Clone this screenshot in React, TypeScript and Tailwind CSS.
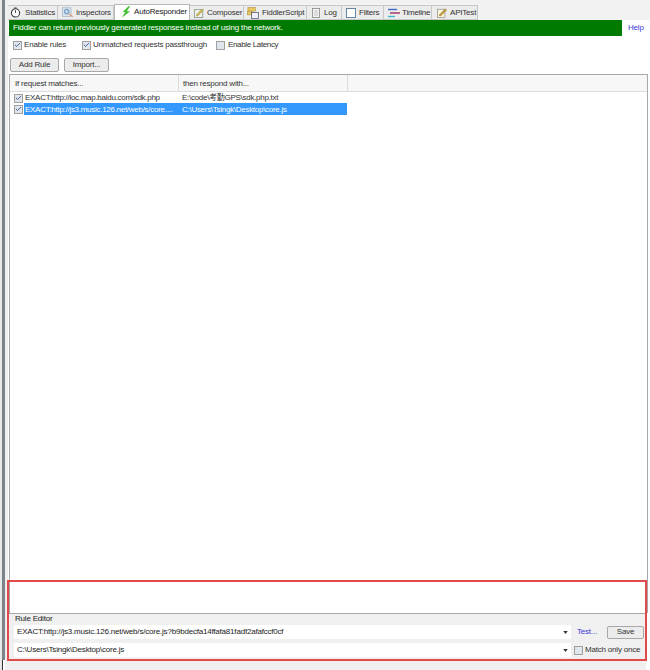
import React from 'react';
import { Check } from 'lucide-react';

const font = { fontFamily: '"Liberation Sans", "Noto Sans CJK SC", sans-serif' };

const tabs = [
  { label: 'Statistics', width: 'w-[50px]', gap: 'gap-[4px]', pad: 'pl-[2px]', icon: 'clock' },
  { label: 'Inspectors', width: 'w-[56px]', gap: 'gap-[2px]', pad: 'pl-[4px]', icon: 'search' },
  { label: 'AutoResponder', width: 'w-[76px]', gap: 'gap-[3px]', pad: 'pl-[6px]', icon: 'bolt', active: true },
  { label: 'Composer', width: 'w-[54px]', gap: 'gap-[3px]', pad: 'pl-[4px]', icon: 'compose' },
  { label: 'FiddlerScript', width: 'w-[63px]', gap: 'gap-[3px]', pad: 'pl-[3px]', icon: 'script' },
  { label: 'Log', width: 'w-[35px]', gap: 'gap-[4px]', pad: 'pl-[5px]', icon: 'log' },
  { label: 'Filters', width: 'w-[42px]', gap: 'gap-[3px]', pad: 'pl-[4px]', icon: 'filter' },
  { label: 'Timeline', width: 'w-[48px]', gap: 'gap-[2px]', pad: 'pl-[3px]', icon: 'timeline' },
  { label: 'APITest', width: 'w-[46px]', gap: 'gap-[3px]', pad: 'pl-[5px]', icon: 'api' },
];

function TabIcon({ name }: { name: string }) {
  if (name === 'clock') {
    return (
      <svg viewBox="0 0 12 12" className="w-[11px] h-[11px] shrink-0">
        <circle cx="6" cy="6.5" r="4.5" fill="#fff" stroke="#333" strokeWidth="1.1" />
        <path d="M6 6.5V3.5M4.8 1h2.4" stroke="#333" strokeWidth="1" fill="none" />
      </svg>
    );
  }
  if (name === 'search') {
    return (
      <svg viewBox="0 0 14 12" className="w-[12px] h-[11px] shrink-0">
        <rect x="0.5" y="0.5" width="10" height="10" fill="#dbe7f2" stroke="#a8b8c8" />
        <circle cx="5.5" cy="5" r="2.8" fill="#b8d4ec" stroke="#5a7fa5" />
        <path d="M8 7.5l4.5 3.5" stroke="#e0a070" strokeWidth="1.6" />
      </svg>
    );
  }
  if (name === 'bolt') {
    return (
      <svg viewBox="0 0 12 14" className="w-[10px] h-[12px] shrink-0">
        <path d="M9 0L2 7h3L1 14l10-8H7l4-6z" fill="#3fbf2e" />
      </svg>
    );
  }
  if (name === 'compose') {
    return (
      <svg viewBox="0 0 12 12" className="w-[10px] h-[10px] shrink-0">
        <rect x="0.5" y="2" width="10" height="9.5" fill="#eef2e6" stroke="#8a9a8a" />
        <path d="M3 8l7-7 1.5 1.5-7 7H3z" fill="#d8b850" stroke="#7a8a50" strokeWidth="0.5" />
      </svg>
    );
  }
  if (name === 'script') {
    return (
      <svg viewBox="0 0 13 13" className="w-[12px] h-[12px] shrink-0">
        <rect x="1" y="0.5" width="8" height="4" fill="#e8c860" stroke="#b09040" strokeWidth="0.6" />
        <rect x="0.5" y="4.5" width="5" height="4" fill="#e8c860" stroke="#b09040" strokeWidth="0.6" />
        <rect x="5" y="6" width="7.5" height="6.5" fill="#eef" stroke="#556" strokeWidth="0.8" />
      </svg>
    );
  }
  if (name === 'log') {
    return (
      <svg viewBox="0 0 10 12" className="w-[8px] h-[10px] shrink-0">
        <rect x="0.5" y="0.5" width="9" height="11" fill="#f4f4f4" stroke="#888" />
        <path d="M2.5 3.5h5M2.5 6h5M2.5 8.5h5" stroke="#bbb" />
      </svg>
    );
  }
  if (name === 'filter') {
    return (
      <svg viewBox="0 0 11 11" className="w-[10px] h-[10px] shrink-0">
        <rect x="0.5" y="0.5" width="10" height="10" fill="#fff" stroke="#5a7a9a" />
      </svg>
    );
  }
  if (name === 'timeline') {
    return (
      <svg viewBox="0 0 13 10" className="w-[13px] h-[10px] shrink-0">
        <path d="M1 1.5h9" stroke="#3a6ac8" strokeWidth="1.4" />
        <path d="M3 5h10" stroke="#a03060" strokeWidth="1.4" />
        <path d="M1 8.5h7" stroke="#40b8d0" strokeWidth="1.4" />
      </svg>
    );
  }
  return (
    <svg viewBox="0 0 12 12" className="w-[10px] h-[10px] shrink-0">
      <rect x="0.5" y="1.5" width="9" height="10" fill="#fbf6d8" stroke="#999" />
      <path d="M3 8l7-7 1.5 1.5-7 7H3z" fill="#c8a040" stroke="#806020" strokeWidth="0.5" />
    </svg>
  );
}

function CheckBox({ checked }: { checked?: boolean }) {
  return (
    <span className="w-[9px] h-[9px] shrink-0 border border-[#a0a0a0] bg-[#dfe6ee] flex items-center justify-center">
      {checked && <Check size={8} strokeWidth={3} className="text-[#3b4f86]" />}
    </span>
  );
}

function Combo({ text }: { text: string }) {
  return (
    <div className="h-[14px] w-[557px] shrink-0 bg-white flex items-center justify-between pl-[3px] pr-[3px] text-[#222]">
      <span>{text}</span>
      <svg viewBox="0 0 6 4" className="w-[5px] h-[3px]">
        <path d="M0 0h6L3 4z" fill="#333" />
      </svg>
    </div>
  );
}

export default function App() {
  return (
    <div style={font} className="relative w-[650px] h-[670px] overflow-hidden flex bg-white text-[8px] leading-none tracking-[-0.2px] text-[#333]">
      {/* window edge on the left */}
      <div className="w-[2px] bg-[#e8e8e8]" />
      <div className="w-[3px] flex flex-col bg-[#7c8489]">
        <div className="flex-1" />
        <div className="h-[10px] bg-white border-l border-[#333]" />
      </div>
      <div className="w-[3px] bg-[#f0f0f0]" />

      <div className="flex-1 flex flex-col min-w-0">
        {/* tab strip */}
        <div className="h-[20px] shrink-0 bg-[#f2f2f2] flex items-end">
          {tabs.map((tab) =>
            tab.active ? (
              <div key={tab.label} className={`${tab.width} ${tab.gap} ${tab.pad} h-[16px] pb-[1px] bg-white border border-b-0 border-[#b8b8b8] flex items-center text-[#222]`}>
                <TabIcon name={tab.icon} />
                {tab.label}
              </div>
            ) : (
              <div key={tab.label} className={`${tab.width} ${tab.gap} ${tab.pad} h-[15px] bg-[#ececec] border-r border-t border-b border-[#c8c8c8] flex items-center`}>
                <TabIcon name={tab.icon} />
                {tab.label}
              </div>
            )
          )}
        </div>

        {/* info bar */}
        <div className="h-[16px] shrink-0 flex items-center">
          <div className="w-[613px] h-[16px] ml-[1px] bg-[#007a00] text-white flex items-center pl-[4px] tracking-[-0.16px]">
            Fiddler can return previously generated responses instead of using the network.
          </div>
          <span className="ml-[6px] text-[#3b3bd8]">Help</span>
        </div>

        {/* options */}
        <div className="h-[18px] shrink-0 flex items-center pl-[5px]">
          <CheckBox checked />
          <span className="ml-[2px] w-[58px] whitespace-nowrap">Enable rules</span>
          <CheckBox checked />
          <span className="ml-[2px] w-[123px] whitespace-nowrap">Unmatched requests passthrough</span>
          <CheckBox />
          <span className="ml-[3px] whitespace-nowrap tracking-[-0.35px]">Enable Latency</span>
        </div>

        {/* buttons */}
        <div className="h-[14px] shrink-0 flex gap-[5px] pl-[2px] mt-[4px]">
          <div className="w-[49px] border border-[#a8a8a8] rounded-[2px] bg-[#ececec] flex items-center justify-center">Add Rule</div>
          <div className="w-[45px] border border-[#a8a8a8] rounded-[2px] bg-[#ececec] flex items-center justify-center">Import...</div>
        </div>

        {/* rule list */}
        <div className="flex-1 mt-[2px] mr-[2px] ml-[1px] border border-b-0 border-[#a8a8a8] flex flex-col min-h-0">
          <div className="h-[17px] shrink-0 flex items-center bg-[#f7f7f7] border-b border-[#dcdcdc]">
            <div className="w-[169px] h-full flex items-center pl-[5px] pt-[1px] border-r border-[#dcdcdc]">If request matches...</div>
            <div className="w-[169px] h-full flex items-center pl-[4px] pt-[1px] border-r border-[#dcdcdc]">then respond with...</div>
          </div>
          <div className="h-[11px] shrink-0 flex items-center pl-[4px] pt-[1px] tracking-[-0.28px]">
            <CheckBox checked />
            <span className="w-[157px] ml-[2px] whitespace-nowrap">EXACT:http://loc.map.baidu.com/sdk.php</span>
            <span className="whitespace-nowrap">E:\code\考勤GPS\sdk.php.txt</span>
          </div>
          <div className="h-[12px] shrink-0 flex items-center pl-[4px] tracking-[-0.28px]">
            <CheckBox checked />
            <div className="w-[323px] ml-[1px] h-full flex items-center bg-[#3399ff] text-white pt-[1px]">
              <span className="w-[158px] pl-[1px] whitespace-nowrap">EXACT:http://js3.music.126.net/web/s/core....</span>
              <span className="whitespace-nowrap">C:\Users\Tsingk\Desktop\core.js</span>
            </div>
          </div>
        </div>

        {/* rule editor */}
        <div className="h-[57px] shrink-0 mr-[4px] bg-[#f0f0f0] border-t border-[#a8a8a8] pl-[6px]">
          <div className="h-[10px] pt-[1px] pl-[1px] text-[#222]">Rule Editor</div>
          <div className="flex items-center h-[16px]">
            <Combo text="EXACT:http://js3.music.126.net/web/s/core.js?b9bdecfa14ffafa81fadf2afafccf0cf" />
            <span className="ml-[6px] w-[30px] text-[#3b3bd8]">Test...</span>
            <div className="w-[37px] h-[13px] border border-[#a8a8a8] rounded-[2px] bg-[#ececec] flex items-center justify-center">Save</div>
          </div>
          <div className="flex items-center mt-[2px] h-[16px]">
            <Combo text="C:\Users\Tsingk\Desktop\core.js" />
            <span className="ml-[3px]"><CheckBox /></span>
            <span className="ml-[2px] whitespace-nowrap">Match only once</span>
          </div>
        </div>
      </div>

      {/* red annotation round the editor */}
      <div className="absolute left-[7px] top-[580px] w-[640px] h-[81px] border-2 border-[#e24a4a]" />
    </div>
  );
}
